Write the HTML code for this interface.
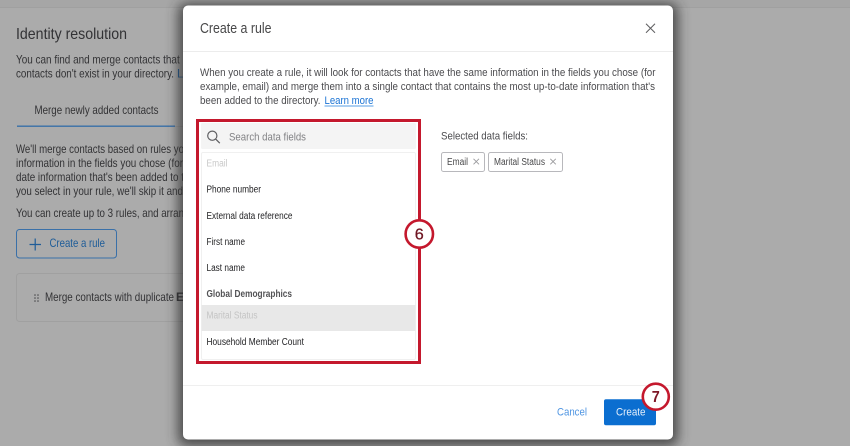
<!DOCTYPE html>
<html><head><meta charset="utf-8">
<style>
html,body{margin:0;padding:0;width:850px;height:446px;overflow:hidden;background:#ababab}
svg{display:block;position:absolute;left:0;top:0}
text{font-family:"Liberation Sans",sans-serif;font-size:10px}
.b{fill:#333335}
.m{fill:#4c4c4f}
.k{fill:#232325}
.t{filter:url(#s)}
</style></head><body>
<svg width="850" height="446" viewBox="0 0 850 446" xmlns="http://www.w3.org/2000/svg">
<defs>
<filter id="s" x="-5%" y="-5%" width="110%" height="110%"><feGaussianBlur stdDeviation="0.35"/></filter>
<filter id="s2" x="-20%" y="-20%" width="140%" height="140%"><feGaussianBlur stdDeviation="0.3"/></filter>
<filter id="sh" x="-20%" y="-20%" width="140%" height="140%"><feGaussianBlur stdDeviation="6"/></filter>
<clipPath id="left"><rect x="0" y="0" width="183" height="446"/></clipPath>
</defs>
<rect width="850" height="446" fill="#ababab"/>
<rect width="850" height="7" fill="#a6a6a6"/>
<rect y="7" width="850" height="1" fill="#a0a0a0"/>

<g clip-path="url(#left)">
<g class="t">
<text x="16" y="39" style="font-size:16px" class="b" textLength="111" lengthAdjust="spacingAndGlyphs">Identity resolution</text>
<text x="16" y="63.5" class="b" style="font-size:11.8px" textLength="172" lengthAdjust="spacingAndGlyphs">You can find and merge contacts that h</text>
<text x="16" y="77.5" class="b" style="font-size:11.8px" textLength="158" lengthAdjust="spacingAndGlyphs">contacts don't exist in your directory.</text>
<text x="177" y="77.5" style="font-size:11.8px" fill="#1f5c98">L</text>
<text x="34.5" y="114" class="b" style="font-size:11.8px" textLength="124" lengthAdjust="spacingAndGlyphs">Merge newly added contacts</text>
<text x="16" y="153" class="b" style="font-size:11.8px" textLength="168" lengthAdjust="spacingAndGlyphs">We'll merge contacts based on rules yo</text>
<text x="16" y="167" class="b" style="font-size:11.8px" textLength="167" lengthAdjust="spacingAndGlyphs">information in the fields you chose (for</text>
<text x="16" y="181" class="b" style="font-size:11.8px" textLength="168" lengthAdjust="spacingAndGlyphs">date information that's been added to t</text>
<text x="16" y="195" class="b" style="font-size:11.8px" textLength="167" lengthAdjust="spacingAndGlyphs">you select in your rule, we'll skip it and</text>
<text x="16" y="217" class="b" style="font-size:11.8px" textLength="168" lengthAdjust="spacingAndGlyphs">You can create up to 3 rules, and arran</text>
<text x="49.5" y="247" style="font-size:11.8px" fill="#1f5c98" textLength="55.5" lengthAdjust="spacingAndGlyphs">Create a rule</text>
<text x="45" y="301" class="b" style="font-size:11.8px" textLength="129" lengthAdjust="spacingAndGlyphs">Merge contacts with duplicate</text>
<text x="176" y="301" class="b" style="font-size:11.8px;font-weight:700">E</text>
</g>
<rect x="17" y="125.5" width="158" height="1.4" fill="#3a70a8"/>
<rect x="175" y="126" width="10" height="1" fill="#a0a0a0"/>
<rect x="16.5" y="229.5" width="100" height="28.5" rx="3" fill="none" stroke="#3a70a8" stroke-width="1"/>
<path d="M29.5 244.5H41M35.2 238.5V250.5" stroke="#1f5c98" stroke-width="1.2" fill="none"/>
<rect x="16.5" y="273.5" width="180" height="48" rx="3" fill="none" stroke="#a0a0a0" stroke-width="1"/>
<g fill="#4a4a4c"><circle cx="35" cy="295" r=".8"/><circle cx="38" cy="295" r=".8"/><circle cx="35" cy="298" r=".8"/><circle cx="38" cy="298" r=".8"/><circle cx="35" cy="301" r=".8"/><circle cx="38" cy="301" r=".8"/></g>
</g>

<rect x="178" y="3" width="500" height="443" rx="8" fill="#333" opacity=".8" filter="url(#sh)"/>
<rect x="183" y="5.5" width="490" height="434" rx="5" fill="#fff"/>
<rect x="183" y="51" width="490" height="1" fill="#ececec"/>
<rect x="183" y="385" width="490" height="1" fill="#efefef"/>

<g class="t">
<text x="200" y="33" style="font-size:14.5px" fill="#48484a" textLength="71.5" lengthAdjust="spacingAndGlyphs">Create a rule</text>
<text x="200" y="76" class="m" style="font-size:11.3px" textLength="455.5" lengthAdjust="spacingAndGlyphs">When you create a rule, it will look for contacts that have the same information in the fields you chose (for</text>
<text x="200" y="90" class="m" style="font-size:11.3px" textLength="455" lengthAdjust="spacingAndGlyphs">example, email) and merge them into a single contact that contains the most up-to-date information that's</text>
<text x="200" y="104" class="m" style="font-size:11.3px" textLength="120.5" lengthAdjust="spacingAndGlyphs">been added to the directory.</text>
<text x="324.5" y="104" style="font-size:11.3px" fill="#1a73d4" textLength="49" lengthAdjust="spacingAndGlyphs">Learn more</text>
</g>
<rect x="324.5" y="105.5" width="49" height="1" fill="#5a9fe4"/>
<path d="M646 23.8L655 32.8M655 23.8L646 32.8" stroke="#5e5e60" stroke-width="1.05" fill="none"/>

<rect x="201" y="123" width="215" height="26" rx="1.5" fill="#f4f4f4"/>
<rect x="201.5" y="152.5" width="214" height="207" rx="1.5" fill="#fff" stroke="#f0f0f0"/>
<rect x="201.5" y="305" width="214" height="26" fill="#e8e8e8"/>
<circle cx="212.3" cy="135.7" r="4.6" fill="none" stroke="#606063" stroke-width="1.2"/>
<path d="M215.8 139.2L219.8 143.2" stroke="#606063" stroke-width="1.3"/>
<g class="t">
<text x="229" y="140.5" style="font-size:11.3px" fill="#828285" textLength="77" lengthAdjust="spacingAndGlyphs">Search data fields</text>
<text x="206.5" y="166.3" style="font-size:9.8px" fill="#c8c8c8" textLength="21" lengthAdjust="spacingAndGlyphs">Email</text>
<text x="206.5" y="192.5" class="k" style="font-size:9.8px" textLength="54.5" lengthAdjust="spacingAndGlyphs">Phone number</text>
<text x="206.5" y="219" class="k" style="font-size:9.8px" textLength="86" lengthAdjust="spacingAndGlyphs">External data reference</text>
<text x="206.5" y="245" class="k" style="font-size:9.8px" textLength="38.5" lengthAdjust="spacingAndGlyphs">First name</text>
<text x="206.5" y="271" class="k" style="font-size:9.8px" textLength="38.5" lengthAdjust="spacingAndGlyphs">Last name</text>
<text x="206.5" y="297" style="font-size:9.8px;font-weight:700" fill="#525255" textLength="85.5" lengthAdjust="spacingAndGlyphs">Global Demographics</text>
<text x="206.5" y="318.7" style="font-size:9.8px" fill="#c4c4c4" textLength="51" lengthAdjust="spacingAndGlyphs">Marital Status</text>
<text x="206.5" y="345" class="k" style="font-size:9.8px" textLength="97.5" lengthAdjust="spacingAndGlyphs">Household Member Count</text>
<text x="441" y="139.5" class="m" style="font-size:10.8px" textLength="87" lengthAdjust="spacingAndGlyphs">Selected data fields:</text>
</g>
<rect x="441.5" y="152.5" width="43" height="19" rx="2" fill="#fff" stroke="#b8b8bc"/>
<rect x="488.5" y="152.5" width="74" height="19" rx="2" fill="#fff" stroke="#b8b8bc"/>
<g class="t">
<text x="447" y="165" fill="#48484a" style="font-size:9.8px" textLength="21" lengthAdjust="spacingAndGlyphs">Email</text>
<text x="494" y="165" fill="#48484a" style="font-size:9.8px" textLength="51" lengthAdjust="spacingAndGlyphs">Marital Status</text>
</g>
<path d="M473.5 158.8L479 164.3M479 158.8L473.5 164.3M550.3 158.8L555.8 164.3M555.8 158.8L550.3 164.3" stroke="#9a9a9d" stroke-width=".9" fill="none"/>

<rect x="197.5" y="120.5" width="222" height="242" fill="none" stroke="#c4182d" stroke-width="3"/>

<rect x="604" y="399.3" width="52" height="26" rx="2" fill="#0b6ed0"/>
<g class="t">
<text x="557" y="415.5" style="font-size:10.8px" fill="#4f95e2" textLength="30" lengthAdjust="spacingAndGlyphs">Cancel</text>
<text x="616" y="415.5" style="font-size:10.8px" fill="#e6f0fb" textLength="29.5" lengthAdjust="spacingAndGlyphs">Create</text>
</g>
<circle cx="419.3" cy="234" r="13.7" fill="#fff" stroke="#c4182d" stroke-width="2.6"/>
<circle cx="655.8" cy="396.7" r="13" fill="#fff" stroke="#c4182d" stroke-width="2.6"/>
<g filter="url(#s2)">
<text x="419.3" y="239.7" text-anchor="middle" style="font-size:16px" fill="#6f1522" stroke="#6f1522" stroke-width=".3" textLength="9" lengthAdjust="spacingAndGlyphs">6</text>
<text x="655.8" y="402" text-anchor="middle" style="font-size:16px;font-weight:700" fill="#7d1826" textLength="8" lengthAdjust="spacingAndGlyphs">7</text>
</g>
</svg>
</body></html>
